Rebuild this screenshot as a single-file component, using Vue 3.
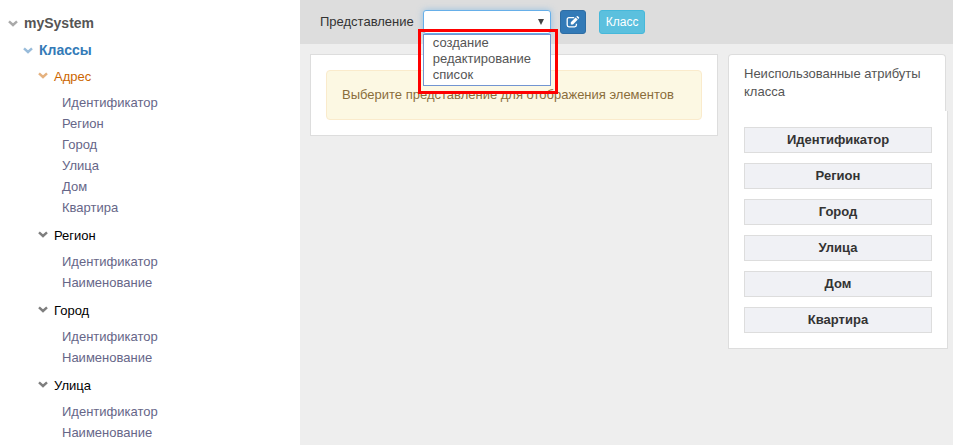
<script setup>
import { ref } from 'vue'

const tree = [
  {
    name: 'Адрес',
    active: true,
    attributes: ['Идентификатор', 'Регион', 'Город', 'Улица', 'Дом', 'Квартира'],
  },
  { name: 'Регион', attributes: ['Идентификатор', 'Наименование'] },
  { name: 'Город', attributes: ['Идентификатор', 'Наименование'] },
  { name: 'Улица', attributes: ['Идентификатор', 'Наименование'] },
]
const views = ['создание', 'редактирование', 'список']
const unused = ['Идентификатор', 'Регион', 'Город', 'Улица', 'Дом', 'Квартира']
const selected = ref('')
</script>

<template>
  <div class="app">
    <nav class="sidebar">
      <a href="#" class="node root">
        <svg class="chevron" viewBox="0 0 10 7"><path d="M1 1.3 L5 5 L9 1.3" /></svg>
        mySystem
      </a>
      <a href="#" class="node classes">
        <svg class="chevron" viewBox="0 0 10 7"><path d="M1 1.3 L5 5 L9 1.3" /></svg>
        Классы
      </a>
      <section v-for="group in tree" :key="group.name">
        <a href="#" class="node group" :class="{ active: group.active }">
          <svg class="chevron" viewBox="0 0 10 7"><path d="M1 1.3 L5 5 L9 1.3" /></svg>
          {{ group.name }}
        </a>
        <ul class="attributes">
          <li v-for="attr in group.attributes" :key="attr">
            <a href="#">{{ attr }}</a>
          </li>
        </ul>
      </section>
    </nav>

    <main class="main">
      <header class="toolbar">
        <label for="view">Представление</label>
        <div class="picker">
          <select id="view" v-model="selected">
            <option value=""></option>
            <option v-for="view in views" :key="view" :value="view">{{ view }}</option>
          </select>
          <svg class="arrow" viewBox="0 0 6 6"><path d="M0 0 H6 L3 6 Z" /></svg>
          <div class="highlight">
            <ul class="options">
              <li v-for="view in views" :key="view" @click="selected = view">{{ view }}</li>
            </ul>
          </div>
        </div>
        <button type="button" class="btn edit" aria-label="Редактировать">
          <svg viewBox="0 0 14 12">
            <path
              class="frame"
              d="M8.2 1.7 H3 Q1.2 1.7 1.2 3.5 V9 Q1.2 10.8 3 10.8 H8.6 Q10.4 10.8 10.4 9 V7.8"
            />
            <path class="pen" d="M4.8 6.2 L9.6 1.4 L11.8 3.6 L7 8.4 H4.8 Z M10.2 0.8 L10.9 0.2 Q11.4 -0.2 11.9 0.2 L13 1.3 Q13.4 1.8 13 2.3 L12.4 3 Z" />
          </svg>
        </button>
        <button type="button" class="btn class-btn">Класс</button>
      </header>

      <div class="content">
        <section class="panel">
          <div class="alert" role="alert">Выберите представление для отображения элементов</div>
        </section>
        <aside class="unused">
          <h2>Неиспользованные атрибуты класса</h2>
          <div class="unused-list">
            <button v-for="attr in unused" :key="attr" type="button">{{ attr }}</button>
          </div>
        </aside>
      </div>
    </main>
  </div>
</template>

<style>
body {
  margin: 0;
  overflow: hidden;
}
</style>

<style scoped>
* {
  box-sizing: border-box;
}
.app {
  display: flex;
  height: 100vh;
  overflow: hidden;
  background: #eee;
  color: #333;
  font-family: 'Liberation Sans', Arial, sans-serif;
  font-size: 13px;
  line-height: 18px;
}
ul {
  margin: 0;
  padding: 0;
  list-style: none;
}
a {
  text-decoration: none;
}
button,
select {
  font-family: inherit;
}

.sidebar {
  flex: 0 0 300px;
  padding: 14px 0 0 8px;
  background: #fff;
}
.node {
  display: flex;
  align-items: center;
  gap: 6px;
}
.chevron {
  width: 10px;
  height: 7px;
  fill: none;
  stroke: currentColor;
  stroke-width: 2.4;
  opacity: 0.5;
}
.root {
  margin-bottom: 9px;
  color: #555;
  font-size: 14px;
  font-weight: bold;
}
.classes {
  padding-left: 15px;
  color: #337ab7;
  font-size: 14px;
  font-weight: bold;
}
.group {
  padding: 9px 0 6px 30px;
  color: #000;
}
.group .chevron {
  margin-bottom: 4px;
}
.group.active {
  color: #cc6600;
}
.attributes {
  padding-left: 54px;
}
.attributes li {
  line-height: 21px;
}
.attributes a {
  color: #668;
}

.main {
  flex: 1;
  min-width: 0;
}
.toolbar {
  display: flex;
  align-items: center;
  padding: 10px 20px;
  background: #ddd;
}
.picker {
  position: relative;
  width: 128px;
  height: 24px;
  margin: 0 9px;
}
select {
  display: block;
  width: 100%;
  height: 24px;
  padding: 0 20px 0 8px;
  border: 1px solid #66afe9;
  border-radius: 3px;
  outline: none;
  appearance: none;
  background: #fff;
  box-shadow: 0 0 6px rgba(102, 175, 233, 0.6);
  color: #555;
  font-size: 13px;
}
.arrow {
  position: absolute;
  top: 9px;
  right: 7px;
  width: 6px;
  height: 6px;
  fill: #444;
  pointer-events: none;
}
.highlight {
  position: absolute;
  z-index: 2;
  top: 19px;
  left: -5px;
  right: -7px;
  padding: 2px 4px 5px 2px;
  border: 3px solid #f00;
}
.options {
  padding-bottom: 2px;
  border: 1px solid #7295d2;
  background: #fff;
  color: #555;
}
.options li {
  padding-left: 9px;
  line-height: 16px;
}
.btn {
  height: 24px;
  border: 1px solid;
  border-radius: 3px;
  color: #fff;
  font-size: 12px;
}
.edit {
  display: flex;
  align-items: center;
  justify-content: center;
  width: 26px;
  padding: 0;
  border-color: #2e6da4;
  background: #337ab7;
}
.edit svg {
  width: 14px;
  height: 12px;
}
.frame {
  fill: none;
  stroke: #fff;
  stroke-width: 1.3;
}
.pen {
  fill: #fff;
}
.class-btn {
  margin-left: 13px;
  padding: 0 6px;
  border-color: #46b8da;
  background: #5bc0de;
}

.content {
  display: flex;
  align-items: flex-start;
  gap: 10px;
  padding: 10px 5px 0 10px;
}
.panel {
  flex: 1;
  padding: 15px;
  border: 1px solid #ddd;
  background: #fff;
}
.alert {
  padding: 15px;
  border: 1px solid #faebcc;
  border-radius: 4px;
  background: #fcf8e3;
  color: #8a6d3b;
}
.unused {
  flex: 0 0 220px;
}
h2 {
  margin: 0 2px 0 0;
  padding: 10px 15px;
  border: 1px solid #ddd;
  border-bottom: 0;
  border-radius: 4px 4px 0 0;
  background: #fff;
  color: #555;
  font-size: 13px;
  font-weight: normal;
}
.unused-list {
  display: grid;
  gap: 10px;
  padding: 16px 15px 15px;
  border: 1px solid #ddd;
  border-top: 0;
  background: #fff;
}
.unused-list button {
  height: 26px;
  padding: 0 0 2px;
  border: 1px solid #ddd;
  background: #f0f1f5;
  color: #333;
  font-size: 13px;
  font-weight: bold;
}
</style>
